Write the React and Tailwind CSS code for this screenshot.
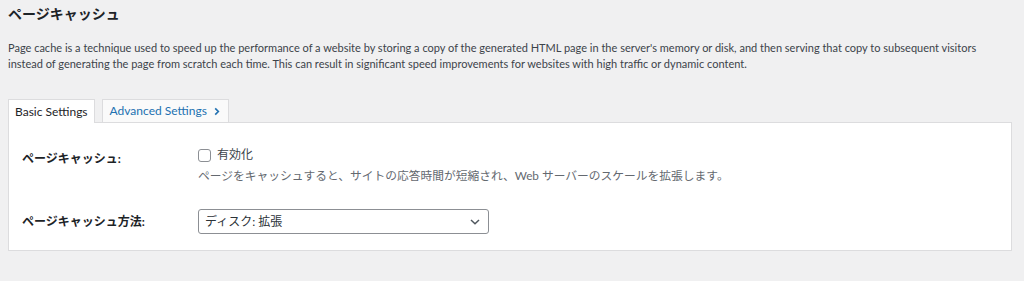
import React from "react";

const font = { fontFamily: 'Lato, "Noto Sans CJK JP", sans-serif' };

const App = () => {
  return (
    <div className="min-h-[281px] w-[1024px] bg-[#f0f0f1] text-[#3c434a]" style={font}>
      <div className="px-2 pt-[4px]">
        <h2 className="text-[14px] font-bold leading-5 text-[#1d2327]">ページキャッシュ</h2>
        <p className="mt-[16px] whitespace-nowrap text-[11px] leading-4 text-[#3c434a]">
          Page cache is a technique used to speed up the performance of a website by storing a copy of the generated
          HTML page in the server's memory or disk, and then serving that copy to subsequent visitors
          <br />
          instead of generating the page from scratch each time. This can result in significant speed improvements for
          websites with high traffic or dynamic content.
        </p>

        <div className="mt-[27px] flex gap-[7px]">
          <div className="-mb-px h-[24px] border border-b-0 border-[#dcdcde] bg-white px-[6px] text-[12px] leading-[23px] text-[#1d2327]">
            Basic Settings
          </div>
          <div className="flex h-[23px] items-center gap-[6px] border border-b-0 border-[#dcdcde] bg-[#fafafa] px-[7px] text-[12px] text-[#2271b1]">
            Advanced Settings
            <svg width="8" height="9" viewBox="0 0 8 10" fill="none" stroke="#2271b1" strokeWidth="1.8">
              <path d="M2 1.5 L5.5 5 L2 8.5" />
            </svg>
          </div>
        </div>

        <div className="h-[129px] w-[1004px] border border-[#dcdcde] bg-white pl-[13px] pt-[25px]">
          <div className="flex">
            <div className="w-[176px] pt-[3px] text-[12px] font-bold leading-4 text-[#1d2327]">ページキャッシュ:</div>
            <div className="flex flex-col">
              <label className="flex items-center gap-[6px] text-[12px] leading-[14px] text-[#3c434a]">
                <span className="inline-block h-[13px] w-[13px] rounded-[3px] border border-[#8c8f94] bg-white" />
                有効化
              </label>
              <p className="mt-[6px] text-[11.75px] leading-4 text-[#646970]">
                ページをキャッシュすると、サイトの応答時間が短縮され、Web サーバーのスケールを拡張します。
              </p>
            </div>
          </div>

          <div className="mt-[25px] flex items-center">
            <div className="w-[176px] text-[12px] font-bold leading-4 text-[#1d2327]">ページキャッシュ方法:</div>
            <div className="flex h-[25px] w-[291px] items-center justify-between rounded-[3px] border border-[#8c8f94] bg-white pl-[6px] pr-[8px] text-[12px] text-[#2c3338]">
              <span>ディスク: 拡張</span>
              <svg width="10" height="6" viewBox="0 0 10 6" fill="none" stroke="#50575e" strokeWidth="1.5">
                <path d="M1 1 L5 4.8 L9 1" />
              </svg>
            </div>
          </div>
        </div>
      </div>
    </div>
  );
};

export default App;
